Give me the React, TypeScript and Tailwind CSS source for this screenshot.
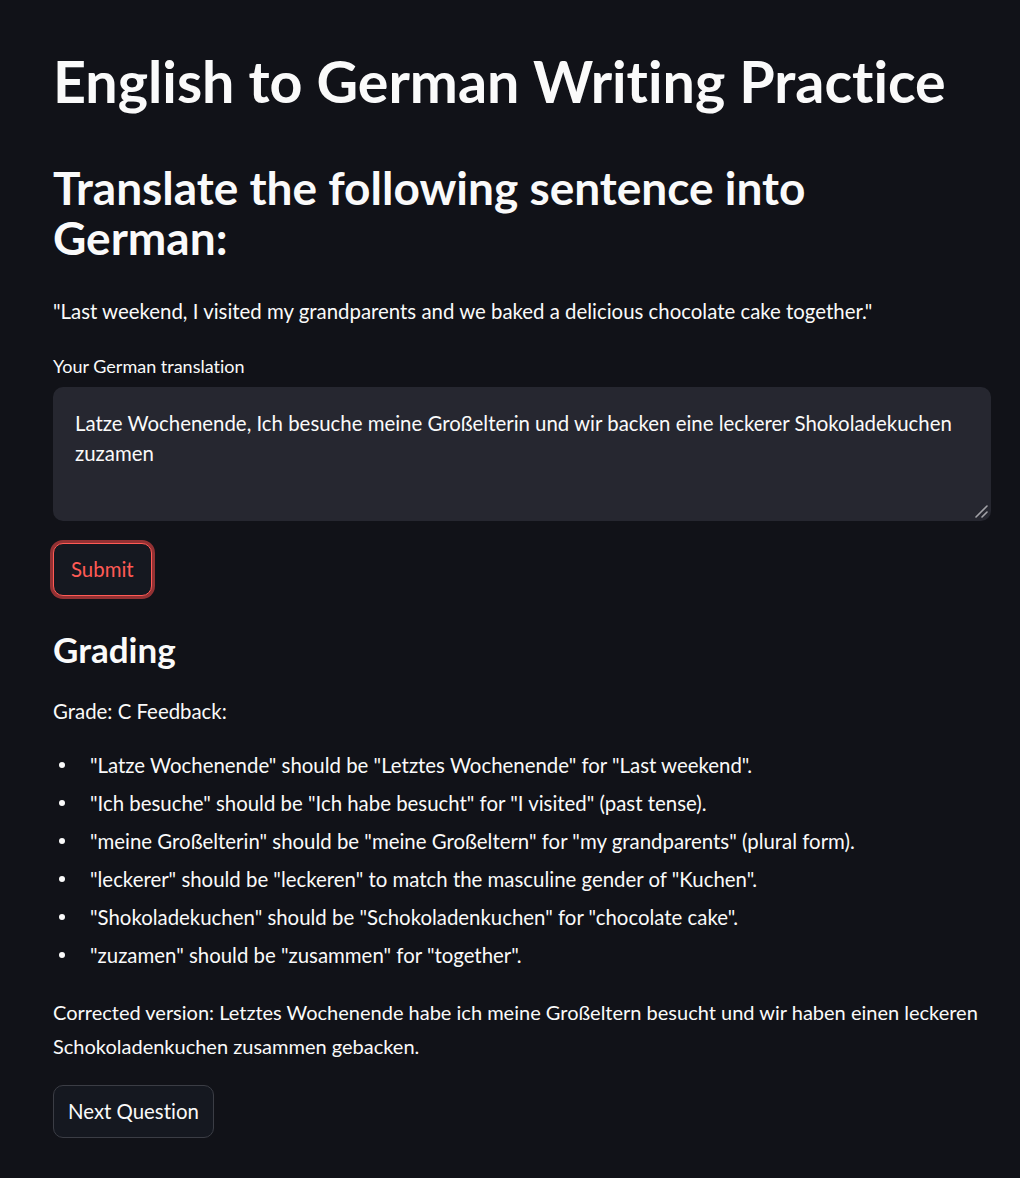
import React from "react";

const feedback = [
  '"Latze Wochenende" should be "Letztes Wochenende" for "Last weekend".',
  '"Ich besuche" should be "Ich habe besucht" for "I visited" (past tense).',
  '"meine Großelterin" should be "meine Großeltern" for "my grandparents" (plural form).',
  '"leckerer" should be "leckeren" to match the masculine gender of "Kuchen".',
  '"Shokoladekuchen" should be "Schokoladenkuchen" for "chocolate cake".',
  '"zuzamen" should be "zusammen" for "together".',
];

export default function App() {
  return (
    <div className="min-h-[1178px] bg-[#111218] text-[#fafafa] font-['Lato',sans-serif] [font-variant-ligatures:none]">
      <div className="pl-[53px] pr-[29px] pt-[49px] pb-10 w-[1020px]">
        <h1 className="text-[57.4px] leading-[64px] font-bold">
          English to German Writing Practice
        </h1>
        <h2 className="mt-[50px] text-[46px] leading-[50px] font-bold w-[820px]">
          Translate the following sentence into German:
        </h2>
        <p className="mt-[31px] text-[20.4px] leading-[34px]">
          "Last weekend, I visited my grandparents and we baked a delicious chocolate cake together."
        </p>
        <label className="block mt-[26px] text-[18px] leading-[24px]">
          Your German translation
        </label>
        <div className="relative mt-[9px]">
          <textarea
            readOnly
            defaultValue="Latze Wochenende, Ich besuche meine Großelterin und wir backen eine leckerer Shokoladekuchen zuzamen"
            className="block w-full h-[134px] rounded-[10px] bg-[#262730] px-[22px] pt-[21px] text-[20.4px] leading-[30px] text-[#fafafa] outline-none resize-none"
          />
          <svg
            className="absolute right-[3px] bottom-[3px]"
            width="14"
            height="14"
            viewBox="0 0 14 14"
          >
            <path d="M13 2 L2 13 M13 8 L8 13" stroke="#a3a3a8" strokeWidth="1.6" strokeLinecap="round" />
          </svg>
        </div>
        <button className="block mt-[22px] h-[53px] px-[17px] rounded-[10px] border border-[#ff5a55] bg-[#151820] text-[20.4px] text-[#ff5a55] ring-[3px] ring-[#ff4b4b]/55">
          Submit
        </button>
        <h3 className="mt-[31px] text-[35px] leading-[44px] font-bold">
          Grading
        </h3>
        <p className="mt-[23px] text-[20.4px] leading-[34px]">Grade: C Feedback:</p>
        <ul className="mt-[20px] flex flex-col gap-[4px]">
          {feedback.map((f) => (
            <li key={f} className="flex items-center text-[20.4px] leading-[34px]">
              <span className="w-[37px] flex-none flex pl-[6px]">
                <span className="w-[6px] h-[6px] rounded-full bg-[#fafafa]" />
              </span>
              <span>{f}</span>
            </li>
          ))}
        </ul>
        <p className="mt-[23px] text-[20px] leading-[34px]">
          Corrected version: Letztes Wochenende habe ich meine Großeltern besucht und wir haben einen leckeren
          Schokoladenkuchen zusammen gebacken.
        </p>
        <button className="block mt-[22px] h-[53px] px-[14px] rounded-[10px] border border-[#3b3d45] bg-[#151820] text-[20.4px]">
          Next Question
        </button>
      </div>
    </div>
  );
}
